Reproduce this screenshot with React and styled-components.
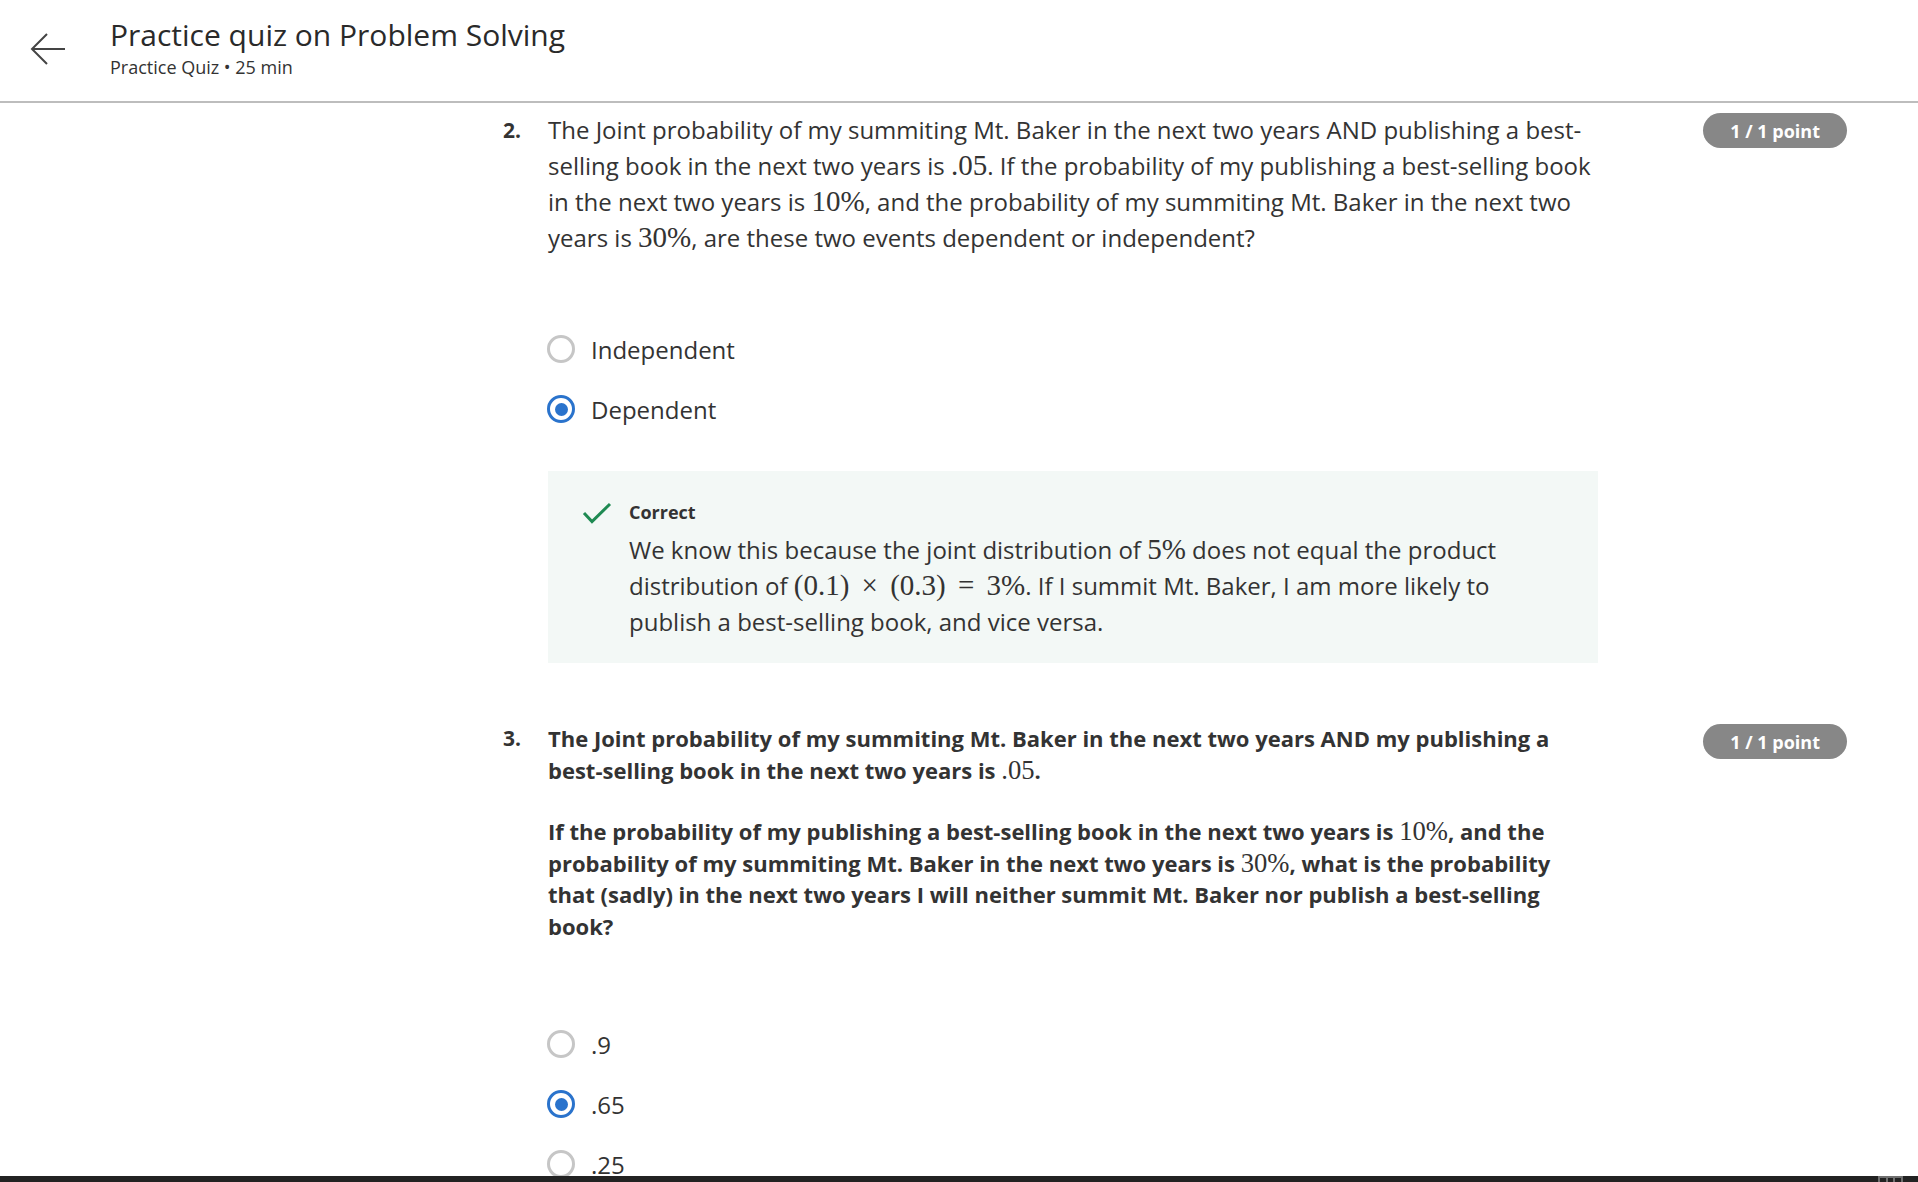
import React from 'react'
import styled, { createGlobalStyle } from 'styled-components'

const GlobalStyle = createGlobalStyle`
    html, body {
        margin: 0;
        padding: 0;
        background: #ffffff;
        font-family: "Open Sans", "Noto Sans", sans-serif;
        color: #333333;
        overflow: hidden;
    }
`

const Page = styled.div`
    height: 1182px;
    display: flex;
    flex-direction: column;
`

const Header = styled.header`
    height: 101px;
    flex-shrink: 0;
    display: flex;
    align-items: flex-start;
    padding-left: 30px;
    border-bottom: 2px solid #bdbdbd;
    box-sizing: content-box;
`

const BackButton = styled.div`
    width: 36px;
    height: 32px;
    margin-top: 33px;
    margin-right: 44px;
`

const TitleBlock = styled.div`
    padding-top: 16px;
    display: flex;
    flex-direction: column;
`

const Title = styled.h1`
    margin: 0;
    font-size: 30px;
    line-height: 38px;
    font-weight: 400;
    color: #2a2a2a;
`

const Subtitle = styled.div`
    margin-top: 1px;
    font-size: 18px;
    line-height: 24px;
    color: #333333;
`

const Main = styled.main`
    flex: 1;
    overflow: hidden;
    padding: 9px 71px 0 503px;
`

const Question = styled.section`
    display: grid;
    grid-template-columns: 45px 1050px 1fr auto;
    margin-top: ${p => p.$gap || 0}px;
`

const Number = styled.div`
    font-weight: 700;
    font-size: 21px;
    line-height: ${p => p.$lh}px;
    color: #333333;
`

const Body = styled.div`
    grid-column: 2;
`

const Prompt = styled.p`
    margin: 0;
    font-size: ${p => (p.$bold ? 22 : 24)}px;
    line-height: ${p => (p.$bold ? 31.5 : 36)}px;
    font-weight: ${p => (p.$bold ? 700 : 400)};
    color: #333333;

    & + & {
        margin-top: 30px;
    }
`

const M = styled.span`
    font-family: "Liberation Serif", "DejaVu Serif", serif;
    font-size: 1.21em;
    font-weight: 400;
    line-height: 1;
`

const Op = styled.span`
    padding: 0 0.42em;
`

const Badge = styled.div`
    grid-column: 4;
    align-self: start;
    margin-top: 1px;
    height: 35px;
    padding: 0 27px;
    border-radius: 18px;
    background: #878787;
    color: #ffffff;
    font-weight: 700;
    font-size: 18px;
    display: flex;
    align-items: center;
    white-space: nowrap;
`

const Options = styled.div`
    margin-top: ${p => p.$top}px;
    display: flex;
    flex-direction: column;
`

const Option = styled.label`
    height: 60px;
    display: flex;
    align-items: center;
    gap: 16px;
    font-size: 24px;
    color: #333333;
    margin-left: -1px;
`

const Radio = styled.span`
    width: 28px;
    height: 28px;
    box-sizing: border-box;
    border-radius: 50%;
    border: 3px solid ${p => (p.$checked ? '#2a73cc' : '#c6c6c6')};
    display: flex;
    align-items: center;
    justify-content: center;
    flex-shrink: 0;

    &::after {
        content: '';
        width: 13px;
        height: 13px;
        border-radius: 50%;
        background: ${p => (p.$checked ? '#2a73cc' : 'transparent')};
    }
`

const Feedback = styled.div`
    margin-top: 32px;
    background: #f3f8f6;
    padding: 29px 40px 23px 34px;
    display: grid;
    grid-template-columns: 30px 1fr;
    column-gap: 17px;
`

const CheckIcon = styled.svg`
    width: 30px;
    height: 22px;
    margin-top: 2px;
`

const FeedbackTitle = styled.div`
    font-weight: 700;
    font-size: 18px;
    line-height: 24px;
    color: #333333;
`

const FeedbackText = styled.p`
    grid-column: 2;
    margin: 8px 0 0;
    font-size: 24px;
    line-height: 36px;
    color: #333333;
`

const BottomBar = styled.div`
    height: 6px;
    flex-shrink: 0;
    background: #222222;
    display: flex;
    justify-content: flex-end;
    padding-right: 15px;
    overflow: hidden;
`

const TrayIcon = styled.div`
    width: 25px;
    height: 10px;
    box-sizing: border-box;
    border: 2px solid #6f6f6f;
    display: flex;

    & > span {
        flex: 1;
        border-right: 2px solid #6f6f6f;
    }
    & > span:last-child {
        border-right: 0;
    }
`

const BackArrow = () => (
    <svg width="36" height="32" viewBox="0 0 36 32" fill="none">
        <path d="M35 16H2M17 1L2 16L17 31" stroke="#444" strokeWidth="2" />
    </svg>
)

const RadioOption = ({ checked, children }) => (
    <Option>
        <Radio $checked={checked} />
        <span>{children}</span>
    </Option>
)

const App = () => {
    return (
        <Page>
            <GlobalStyle />
            <Header>
                <BackButton>
                    <BackArrow />
                </BackButton>
                <TitleBlock>
                    <Title>Practice quiz on Problem Solving</Title>
                    <Subtitle>Practice Quiz • 25 min</Subtitle>
                </TitleBlock>
            </Header>

            <Main>
                <Question>
                    <Number $lh={36}>2.</Number>
                    <Body>
                        <Prompt>
                            The Joint probability of my summiting Mt. Baker in the next two years AND publishing a best-selling book in the next two years is <M>.05</M>. If the probability of my publishing a best-selling book in the next two years is <M>10%</M>, and the probability of my summiting Mt. Baker in the next two years is <M>30%</M>, are these two events dependent or independent?
                        </Prompt>
                        <Options $top={63}>
                            <RadioOption>Independent</RadioOption>
                            <RadioOption checked>Dependent</RadioOption>
                        </Options>
                        <Feedback>
                            <CheckIcon viewBox="0 0 30 22" fill="none">
                                <path d="M2 11L10 19.5L28 2" stroke="#1e8a52" strokeWidth="3" />
                            </CheckIcon>
                            <FeedbackTitle>Correct</FeedbackTitle>
                            <FeedbackText>
                                We know this because the joint distribution of <M>5%</M> does not equal the product distribution of <M>(0.1)<Op>×</Op>(0.3)<Op>=</Op>3%</M>. If I summit Mt. Baker, I am more likely to publish a best-selling book, and vice versa.
                            </FeedbackText>
                        </Feedback>
                    </Body>
                    <Badge>1 / 1 point</Badge>
                </Question>

                <Question $gap={60}>
                    <Number $lh={31.5}>3.</Number>
                    <Body>
                        <Prompt $bold>
                            The Joint probability of my summiting Mt. Baker in the next two years AND my publishing a best-selling book in the next two years is <M>.05</M>.
                        </Prompt>
                        <Prompt $bold>
                            If the probability of my publishing a best-selling book in the next two years is <M>10%</M>, and the probability of my summiting Mt. Baker in the next two years is <M>30%</M>, what is the probability that (sadly) in the next two years I will neither summit Mt. Baker nor publish a best-selling book?
                        </Prompt>
                        <Options $top={72}>
                            <RadioOption>.9</RadioOption>
                            <RadioOption checked>.65</RadioOption>
                            <RadioOption>.25</RadioOption>
                        </Options>
                    </Body>
                    <Badge>1 / 1 point</Badge>
                </Question>
            </Main>

            <BottomBar>
                <TrayIcon>
                    <span />
                    <span />
                    <span />
                </TrayIcon>
            </BottomBar>
        </Page>
    )
}

export default App
